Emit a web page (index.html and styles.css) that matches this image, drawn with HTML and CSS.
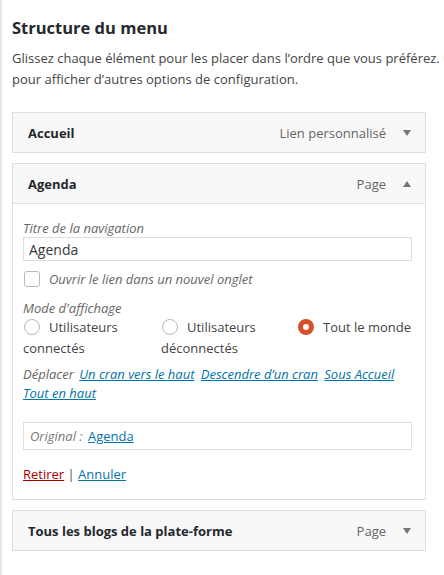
FILE: index.html
```html
<!DOCTYPE html>
<html lang="fr">
<head>
<meta charset="utf-8">
<title>Structure du menu</title>
<link rel="stylesheet" href="styles.css">
</head>
<body>
<div class="page">
  <h3 class="title">Structure du menu</h3>
  <p class="desc">Glissez chaque élément pour les placer dans l’ordre que vous préférez. Cliquez sur la flèche à droite de l’élément<br>pour afficher d’autres options de configuration.</p>

  <ul class="menu">
    <li class="item">
      <div class="handle">
        <span class="item-title">Accueil</span>
        <span class="controls"><span class="type">Lien personnalisé</span><span class="arrow down"></span></span>
      </div>
    </li>

    <li class="item open">
      <div class="handle">
        <span class="item-title">Agenda</span>
        <span class="controls"><span class="type">Page</span><span class="arrow up"></span></span>
      </div>
      <div class="settings">
        <label class="field-label">Titre de la navigation</label>
        <input class="text-input" type="text" value="Agenda">
        <label class="check-row"><span class="checkbox"></span><span class="check-text">Ouvrir le lien dans un nouvel onglet</span></label>

        <div class="field-label mode">Mode d'affichage</div>
        <div class="radios">
          <label class="radio-opt"><span class="radio"></span>Utilisateurs connectés</label>
          <label class="radio-opt"><span class="radio"></span>Utilisateurs déconnectés</label>
          <label class="radio-opt"><span class="radio checked"></span>Tout le monde</label>
        </div>

        <p class="move"><span class="move-label">Déplacer</span> <a href="#">Un cran vers le haut</a> <a href="#">Descendre d’un cran</a> <a href="#">Sous Accueil</a> <a href="#">Tout en haut</a></p>

        <div class="original"><span class="orig-label">Original :</span> <a href="#">Agenda</a></div>

        <div class="actions"><a href="#" class="remove">Retirer</a> <span class="sep">|</span> <a href="#">Annuler</a></div>
      </div>
    </li>

    <li class="item">
      <div class="handle">
        <span class="item-title">Tous les blogs de la plate-forme</span>
        <span class="controls"><span class="type">Page</span><span class="arrow down"></span></span>
      </div>
    </li>
  </ul>
</div>
</body>
</html>
```

FILE: styles.css
```css
html, body {
  margin: 0;
  padding: 0;
  background: #fff;
  overflow: hidden;
}
body {
  border-left: 2px solid #e5e5e5;
  font-family: "Open Sans", "Noto Sans", sans-serif;
  font-size: 13px;
  color: #444;
  min-height: 575px;
  box-sizing: border-box;
}
.page {
  padding: 0 0 0 10px;
  width: 414px;
}
.title {
  margin: 0;
  padding-top: 17px;
  font-size: 16.5px;
  line-height: 22px;
  font-weight: 700;
  color: #23282d;
}
.desc {
  margin: 9px 0 0;
  line-height: 21px;
  white-space: nowrap;
  color: #444;
}
.menu {
  list-style: none;
  margin: 22px 0 0;
  padding: 0;
}
.item {
  margin-bottom: 10px;
}
.handle {
  display: flex;
  align-items: center;
  justify-content: space-between;
  height: 39px;
  border: 1px solid #dfdfdf;
  background: #f8f8f8;
  padding: 0 14px 0 15px;
}
.item-title {
  font-weight: 700;
  color: #23282d;
}
.controls {
  display: flex;
  align-items: center;
  color: #666;
}
.type {
  margin-right: 17px;
}
.arrow {
  width: 0;
  height: 0;
  border-left: 4px solid transparent;
  border-right: 4px solid transparent;
}
.arrow.down { border-top: 6px solid #72777c; }
.arrow.up { border-bottom: 6px solid #72777c; }

.settings {
  border: 1px solid #dfdfdf;
  border-top: none;
  padding: 15px 13px 15px 10px;
  background: #fff;
}
.field-label {
  display: block;
  font-style: italic;
  color: #666;
  line-height: 18px;
}
.text-input {
  display: block;
  box-sizing: border-box;
  width: 100%;
  height: 24px;
  margin: 0;
  border: 1px solid #ddd;
  padding: 0 5px;
  font-family: inherit;
  font-size: 14px;
  color: #32373c;
  outline: none;
}
.check-row {
  display: flex;
  align-items: center;
  margin-top: 9px;
  height: 18px;
}
.checkbox {
  width: 14px;
  height: 14px;
  border: 1px solid #b4b9be;
  border-radius: 3px;
  margin: 0 9px 0 1px;
  background: #fff;
}
.check-text {
  font-style: italic;
  color: #666;
}
.mode {
  margin-top: 11px;
}
.radios {
  display: grid;
  grid-template-columns: 138px 136px 1fr;
  line-height: 21px;
}
.radio-opt {
  color: #444;
}
.radio {
  display: inline-block;
  box-sizing: border-box;
  width: 16px;
  height: 16px;
  border: 1px solid #b4b9be;
  border-radius: 50%;
  vertical-align: -3px;
  margin: 0 9px 0 1px;
  background: #fff;
}
.radio.checked {
  border: 5px solid #d64e2a;
  background: #fff;
}
.move {
  margin: 6px 0 0;
  line-height: 19px;
  font-style: italic;
}
.move-label {
  color: #666;
  margin-right: 2px;
}
.move a {
  margin-right: 3px;
}
a {
  color: #0073aa;
  text-decoration: underline;
}
.original {
  margin-top: 19px;
  border: 1px solid #dfdfdf;
  height: 26px;
  line-height: 26px;
  padding: 0 6px;
}
.orig-label {
  font-style: italic;
  color: #777;
  margin-right: 2px;
}
.actions {
  margin-top: 15px;
  line-height: 19px;
}
.remove {
  color: #a00;
}
.sep {
  color: #555;
}
```
